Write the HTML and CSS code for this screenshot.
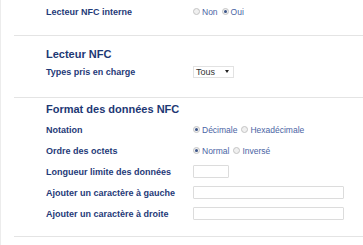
FILE: index.html
```html
<!DOCTYPE html>
<html lang="fr">
<head>
    <meta charset="UTF-8">
    <title>NFC</title>
    <link rel="stylesheet" href="styles.css">
</head>
<body>
    <div class="page">
        <div class="section first">
            <div class="row">
                <span class="label">Lecteur NFC interne</span>
                <span class="field">
                    <span class="radio"></span><span class="opt">Non</span>
                    <span class="radio on"></span><span class="opt">Oui</span>
                </span>
            </div>
        </div>
        <div class="section second">
            <h2>Lecteur NFC</h2>
            <div class="row">
                <span class="label">Types pris en charge</span>
                <span class="field">
                    <span class="select">Tous<span class="arrow"></span></span>
                </span>
            </div>
        </div>
        <div class="section third">
            <h2>Format des données NFC</h2>
            <div class="row">
                <span class="label">Notation</span>
                <span class="field">
                    <span class="radio on"></span><span class="opt">Décimale</span>
                    <span class="radio"></span><span class="opt">Hexadécimale</span>
                </span>
            </div>
            <div class="row">
                <span class="label">Ordre des octets</span>
                <span class="field">
                    <span class="radio on"></span><span class="opt">Normal</span>
                    <span class="radio"></span><span class="opt">Inversé</span>
                </span>
            </div>
            <div class="row">
                <span class="label">Longueur limite des données</span>
                <span class="field"><span class="input short"></span></span>
            </div>
            <div class="row">
                <span class="label">Ajouter un caractère à gauche</span>
                <span class="field"><span class="input long"></span></span>
            </div>
            <div class="row">
                <span class="label">Ajouter un caractère à droite</span>
                <span class="field"><span class="input long"></span></span>
            </div>
        </div>
    </div>
</body>
</html>
```

FILE: styles.css
```css
body {
    margin: 0;
    font-family: "Liberation Sans", Arial, sans-serif;
    background-color: #ffffff;
}

.page {
    border-left: 1px solid #ececec;
    height: 245px;
    box-sizing: border-box;
}

.section {
    margin-left: 13px;
    padding: 5px 0 12px 32px;
    border-bottom: 1px solid #e4e4e4;
}

.section.first {
    padding-top: 1px;
    padding-bottom: 13px;
}

.section.second {
    padding-top: 12px;
    padding-bottom: 15px;
}

h2 {
    margin: 0;
    font-size: 11px;
    line-height: 13px;
    font-weight: bold;
    color: #1d3874;
}

.third h2 {
    margin-bottom: 3px;
}

.row {
    display: flex;
    align-items: center;
    height: 21px;
}

.label {
    width: 147px;
    font-size: 9px;
    font-weight: bold;
    color: #1f3a78;
}

.field {
    display: flex;
    align-items: center;
}

.opt {
    font-size: 8.5px;
    color: #4a64a4;
    margin-right: 4px;
}

.radio {
    width: 5px;
    height: 5px;
    border: 1px solid #c4c4c4;
    border-radius: 50%;
    background-color: #f0f0f0;
    margin-right: 2px;
    position: relative;
}

.radio.on::after {
    content: "";
    position: absolute;
    left: 1px;
    top: 1px;
    width: 3px;
    height: 3px;
    border-radius: 50%;
    background-color: #3b5488;
}

.select {
    display: flex;
    align-items: center;
    justify-content: space-between;
    width: 41px;
    height: 12px;
    box-sizing: border-box;
    border: 1px solid #e2e2e2;
    padding: 0 4px 0 2px;
    font-size: 9px;
    color: #333333;
}

.arrow {
    width: 0;
    height: 0;
    border-left: 2.5px solid transparent;
    border-right: 2.5px solid transparent;
    border-top: 3px solid #222222;
}

.input {
    display: block;
    height: 13px;
    box-sizing: border-box;
    border: 1px solid #dcdcdc;
    border-radius: 1px;
}

.input.short {
    width: 36px;
}

.input.long {
    width: 151px;
}
```
